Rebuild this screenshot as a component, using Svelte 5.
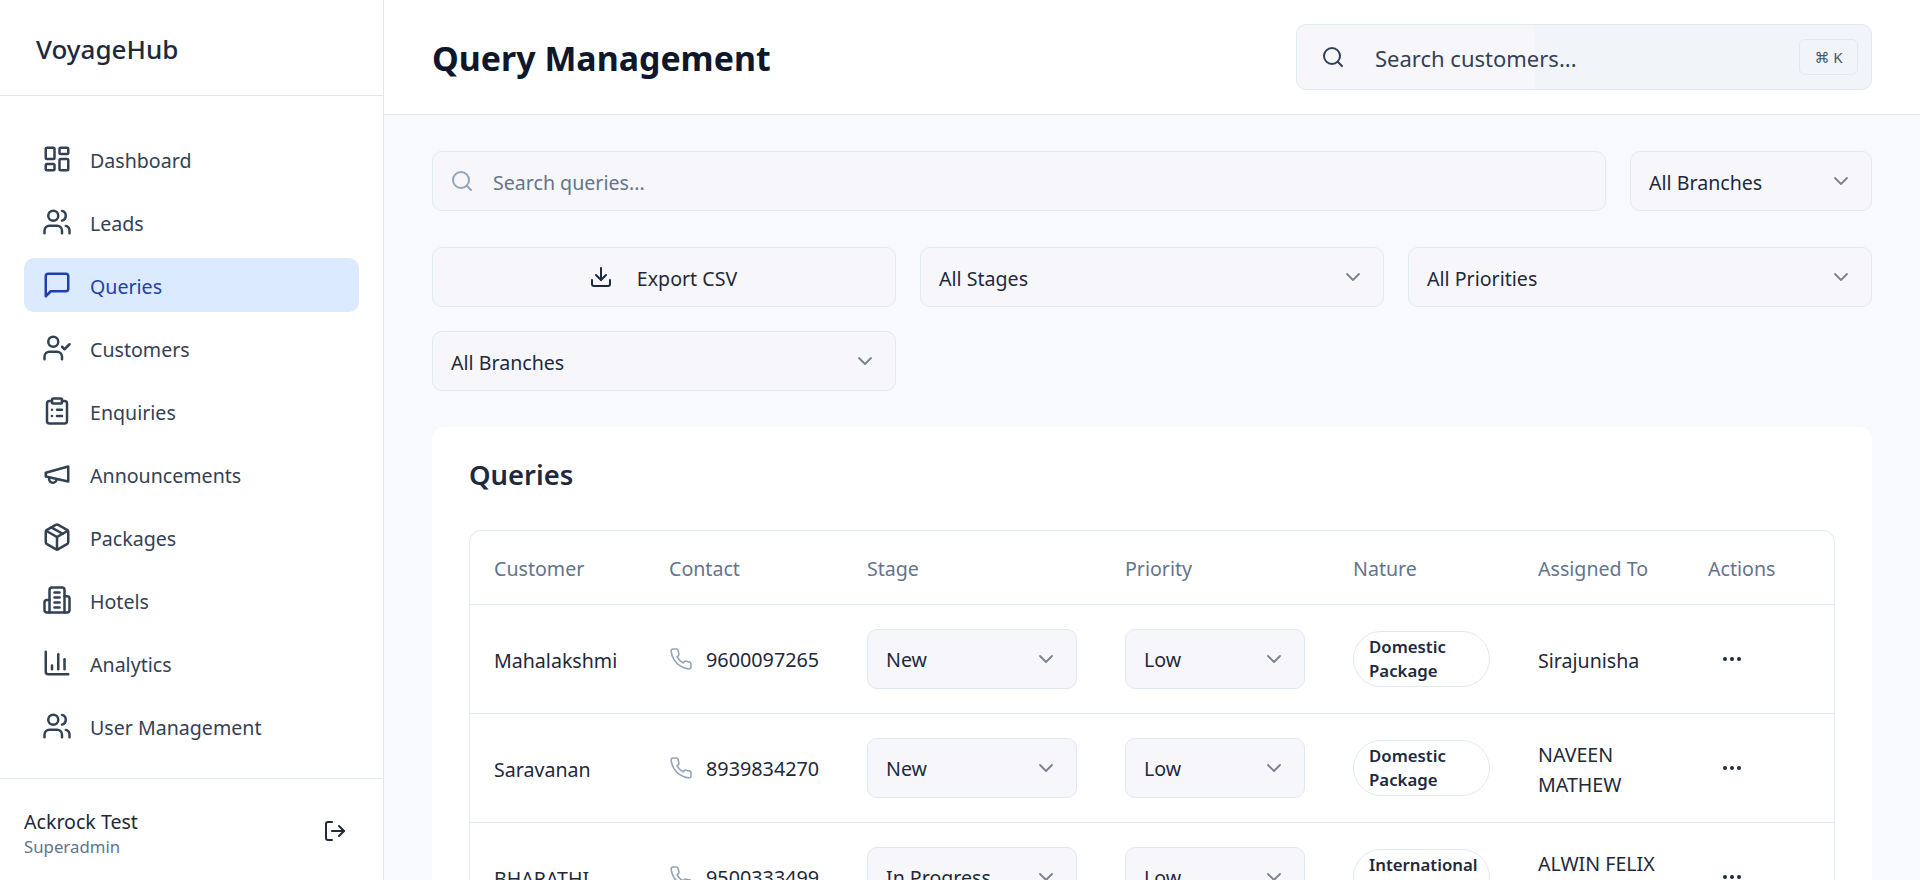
<script lang="ts">
  const icons: Record<string, string[]> = {
    dashboard: [
      "M4 3h5a1 1 0 0 1 1 1v7a1 1 0 0 1-1 1H4a1 1 0 0 1-1-1V4a1 1 0 0 1 1-1z",
      "M15 3h5a1 1 0 0 1 1 1v3a1 1 0 0 1-1 1h-5a1 1 0 0 1-1-1V4a1 1 0 0 1 1-1z",
      "M15 12h5a1 1 0 0 1 1 1v7a1 1 0 0 1-1 1h-5a1 1 0 0 1-1-1v-7a1 1 0 0 1 1-1z",
      "M4 16h5a1 1 0 0 1 1 1v3a1 1 0 0 1-1 1H4a1 1 0 0 1-1-1v-3a1 1 0 0 1 1-1z",
    ],
    users: [
      "M16 21v-2a4 4 0 0 0-4-4H6a4 4 0 0 0-4 4v2",
      "M9 3a4 4 0 1 0 0 8a4 4 0 1 0 0-8z",
      "M22 21v-2a4 4 0 0 0-3-3.87",
      "M16 3.13a4 4 0 0 1 0 7.75",
    ],
    message: ["M21 15a2 2 0 0 1-2 2H7l-4 4V5a2 2 0 0 1 2-2h14a2 2 0 0 1 2 2z"],
    userCheck: [
      "M16 21v-2a4 4 0 0 0-4-4H6a4 4 0 0 0-4 4v2",
      "M9 3a4 4 0 1 0 0 8a4 4 0 1 0 0-8z",
      "M16 11l2 2 4-4",
    ],
    clipboard: [
      "M9 2h6a1 1 0 0 1 1 1v2a1 1 0 0 1-1 1H9a1 1 0 0 1-1-1V3a1 1 0 0 1 1-1z",
      "M16 4h2a2 2 0 0 1 2 2v14a2 2 0 0 1-2 2H6a2 2 0 0 1-2-2V6a2 2 0 0 1 2-2h2",
      "M12 11h4",
      "M12 16h4",
      "M8 11h.01",
      "M8 16h.01",
    ],
    megaphone: ["m3 11 18-5v12L3 14v-3z", "M11.6 16.8a3 3 0 1 1-5.8-1.6"],
    box: [
      "M11 21.73a2 2 0 0 0 2 0l7-4A2 2 0 0 0 21 16V8a2 2 0 0 0-1-1.73l-7-4a2 2 0 0 0-2 0l-7 4A2 2 0 0 0 3 8v8a2 2 0 0 0 1 1.73z",
      "M12 22V12",
      "M3.29 7 12 12l8.71-5",
      "m7.5 4.27 9 5.15",
    ],
    building: [
      "M6 22V4a2 2 0 0 1 2-2h8a2 2 0 0 1 2 2v18Z",
      "M6 12H4a2 2 0 0 0-2 2v6a2 2 0 0 0 2 2h2",
      "M18 9h2a2 2 0 0 1 2 2v9a2 2 0 0 1-2 2h-2",
      "M10 6h4",
      "M10 10h4",
      "M10 14h4",
      "M10 18h4",
    ],
    chart: ["M3 3v16a2 2 0 0 0 2 2h16", "M18 17V9", "M13 17V5", "M8 17v-3"],
    logout: ["M9 21H5a2 2 0 0 1-2-2V5a2 2 0 0 1 2-2h4", "M16 17l5-5-5-5", "M21 12H9"],
    search: ["M11 3a8 8 0 1 0 0 16a8 8 0 1 0 0-16z", "m21 21-4.3-4.3"],
    download: ["M21 15v4a2 2 0 0 1-2 2H5a2 2 0 0 1-2-2v-4", "M7 10l5 5 5-5", "M12 15V3"],
    chevron: ["m6 9 6 6 6-6"],
    phone: [
      "M22 16.92v3a2 2 0 0 1-2.18 2 19.79 19.79 0 0 1-8.63-3.07 19.5 19.5 0 0 1-6-6 19.79 19.79 0 0 1-3.07-8.67A2 2 0 0 1 4.11 2h3a2 2 0 0 1 2 1.72 12.84 12.84 0 0 0 .7 2.81 2 2 0 0 1-.45 2.11L8.09 9.91a16 16 0 0 0 6 6l1.27-1.27a2 2 0 0 1 2.11-.45 12.84 12.84 0 0 0 2.81.7A2 2 0 0 1 22 16.92z",
    ],
    dots: ["M12 11a1 1 0 1 0 0 2a1 1 0 1 0 0-2z", "M19 11a1 1 0 1 0 0 2a1 1 0 1 0 0-2z", "M5 11a1 1 0 1 0 0 2a1 1 0 1 0 0-2z"],
  };

  const navItems = [
    { label: "Dashboard", icon: "dashboard" },
    { label: "Leads", icon: "users" },
    { label: "Queries", icon: "message", active: true },
    { label: "Customers", icon: "userCheck" },
    { label: "Enquiries", icon: "clipboard" },
    { label: "Announcements", icon: "megaphone" },
    { label: "Packages", icon: "box" },
    { label: "Hotels", icon: "building" },
    { label: "Analytics", icon: "chart" },
    { label: "User Management", icon: "users" },
  ];

  const queries = [
    { name: "Mahalakshmi", phone: "9600097265", stage: "New", priority: "Low", nature: "Domestic Package", owner: "Sirajunisha" },
    { name: "Saravanan", phone: "8939834270", stage: "New", priority: "Low", nature: "Domestic Package", owner: "NAVEEN MATHEW" },
    { name: "BHARATHI", phone: "9500333499", stage: "In Progress", priority: "Low", nature: "International Package", owner: "ALWIN FELIX A" },
  ];
</script>

{#snippet icon(name: string, cls: string)}
  <svg class={cls} viewBox="0 0 24 24" fill="none" stroke="currentColor" stroke-linecap="round" stroke-linejoin="round">
    {#each icons[name] as d}
      <path {d} />
    {/each}
  </svg>
{/snippet}

{#snippet dropdown(label: string, cls: string)}
  <div class="select {cls}">
    <span>{label}</span>
    {@render icon("chevron", "chev")}
  </div>
{/snippet}

<div class="app">
  <aside class="sidebar">
    <div class="brand">VoyageHub</div>
    <nav class="nav">
      {#each navItems as item}
        <a class="nav-item" class:active={item.active} href="#/">
          {@render icon(item.icon, "nav-icon")}
          <span>{item.label}</span>
        </a>
      {/each}
    </nav>
    <div class="user">
      <div class="user-info">
        <div class="user-name">Ackrock Test</div>
        <div class="user-role">Superadmin</div>
      </div>
      {@render icon("logout", "logout")}
    </div>
  </aside>

  <main class="main">
    <header class="topbar">
      <h1>Query Management</h1>
      <div class="global-search">
        {@render icon("search", "global-search-icon")}
        <span class="global-search-text">Search customers...</span>
        <kbd>⌘ K</kbd>
      </div>
    </header>

    <div class="content">
      <div class="search-row">
        <div class="query-search">
          {@render icon("search", "query-search-icon")}
          <span>Search queries...</span>
        </div>
        {@render dropdown("All Branches", "branch-top")}
      </div>

      <div class="filters">
        <button class="export">
          {@render icon("download", "export-icon")}
          <span>Export CSV</span>
        </button>
        {@render dropdown("All Stages", "")}
        {@render dropdown("All Priorities", "")}
        {@render dropdown("All Branches", "")}
      </div>

      <section class="card">
        <h2>Queries</h2>
        <div class="table-wrap">
          <table>
            <colgroup>
              <col style="width: 175px" />
              <col style="width: 198px" />
              <col style="width: 258px" />
              <col style="width: 228px" />
              <col style="width: 185px" />
              <col style="width: 170px" />
              <col />
            </colgroup>
            <thead>
              <tr>
                <th>Customer</th>
                <th>Contact</th>
                <th>Stage</th>
                <th>Priority</th>
                <th>Nature</th>
                <th>Assigned To</th>
                <th>Actions</th>
              </tr>
            </thead>
            <tbody>
              {#each queries as q}
                <tr>
                  <td class="text">{q.name}</td>
                  <td>
                    <div class="contact">
                      {@render icon("phone", "phone")}
                      <span>{q.phone}</span>
                    </div>
                  </td>
                  <td>{@render dropdown(q.stage, "stage")}</td>
                  <td>{@render dropdown(q.priority, "priority")}</td>
                  <td><span class="pill">{q.nature}</span></td>
                  <td class="text">{q.owner}</td>
                  <td>
                    <div class="dots">{@render icon("dots", "dots-icon")}</div>
                  </td>
                </tr>
              {/each}
            </tbody>
          </table>
        </div>
      </section>
    </div>
  </main>
</div>

<style>
  :global(body) {
    margin: 0;
    font-family: "Noto Sans", "Liberation Sans", sans-serif;
    color: #1e293b;
  }

  .app {
    display: flex;
    height: 100vh;
    overflow: hidden;
    background: #f8f9fc;
  }

  .sidebar {
    width: 384px;
    flex: none;
    box-sizing: border-box;
    display: flex;
    flex-direction: column;
    background: #fff;
    border-right: 1px solid #e2e8f0;
  }

  .brand {
    height: 96px;
    box-sizing: border-box;
    flex: none;
    display: flex;
    align-items: center;
    padding-left: 36px;
    padding-top: 2px;
    border-bottom: 1px solid #e2e8f0;
    font-size: 26px;
    font-weight: 500;
    color: #1e293b;
  }

  .nav {
    flex: 1;
    display: flex;
    flex-direction: column;
    gap: 9px;
    padding: 36px 24px 0;
  }

  .nav-item {
    height: 54px;
    box-sizing: border-box;
    display: flex;
    align-items: center;
    gap: 18px;
    padding-left: 18px;
    border-radius: 10px;
    font-size: 19.6px;
    color: #334155;
    text-decoration: none;
  }

  .nav-item span {
    padding-top: 3px;
  }

  .nav-item.active {
    background: #dbeafe;
    color: #1e40af;
  }

  .nav-icon {
    width: 30px;
    height: 30px;
    flex: none;
    stroke-width: 2;
  }

  .user {
    height: 102px;
    box-sizing: border-box;
    flex: none;
    display: flex;
    align-items: center;
    justify-content: space-between;
    padding: 0 36px 0 24px;
    border-top: 1px solid #e2e8f0;
  }

  .user-info {
    margin-top: 7px;
  }

  .user-name {
    font-size: 19.6px;
    line-height: 27px;
    color: #1e293b;
  }

  .user-role {
    font-size: 16.8px;
    line-height: 24px;
    color: #64748b;
  }

  .logout {
    width: 24px;
    height: 24px;
    margin-top: 2px;
    stroke-width: 2;
    color: #1e293b;
  }

  .main {
    flex: 1;
    min-width: 0;
    display: flex;
    flex-direction: column;
  }

  .topbar {
    height: 115px;
    box-sizing: border-box;
    flex: none;
    display: flex;
    align-items: center;
    justify-content: space-between;
    padding: 0 48px;
    background: #fff;
    border-bottom: 1px solid #e2e8f0;
  }

  h1 {
    margin: 0;
    padding-top: 2px;
    font-size: 33.9px;
    font-weight: 700;
    color: #0f172a;
  }

  .global-search {
    width: 576px;
    height: 66px;
    box-sizing: border-box;
    display: flex;
    align-items: center;
    padding: 0 13px 0 24px;
    border: 1px solid #e2e8f0;
    border-radius: 10px;
    background: linear-gradient(to right, #f7f7fb 238px, #f1f5f9 238px);
  }

  .global-search-icon {
    width: 24px;
    height: 24px;
    flex: none;
    stroke-width: 2;
    color: #334155;
  }

  .global-search-text {
    flex: 1;
    margin-left: 30px;
    padding-top: 2px;
    font-size: 22px;
    color: #334155;
  }

  kbd {
    width: 59px;
    height: 36px;
    box-sizing: border-box;
    display: flex;
    align-items: center;
    justify-content: center;
    border: 1px solid #e2e8f0;
    border-radius: 6px;
    background: #f1f5f9;
    font-family: "Noto Sans", "DejaVu Sans", sans-serif;
    font-size: 15px;
    color: #475569;
  }

  .content {
    flex: 1;
    padding: 36px 48px;
  }

  .search-row {
    display: flex;
    gap: 24px;
    margin-bottom: 36px;
  }

  .query-search {
    flex: 1;
    height: 60px;
    box-sizing: border-box;
    display: flex;
    align-items: center;
    gap: 19px;
    padding-left: 17px;
    border: 1px solid #e2e8f0;
    border-radius: 10px;
    background: #f7f7fb;
    font-size: 19.6px;
    color: #64748b;
  }

  .query-search span {
    padding-top: 3px;
  }

  .query-search-icon {
    width: 24px;
    height: 24px;
    flex: none;
    stroke-width: 2;
    color: #94a3b8;
  }

  .select {
    height: 60px;
    box-sizing: border-box;
    display: flex;
    align-items: center;
    justify-content: space-between;
    padding: 0 18px;
    border: 1px solid #e2e8f0;
    border-radius: 10px;
    background: #f7f7fb;
    font-size: 19.6px;
    color: #1e293b;
  }

  .select span {
    padding-top: 3px;
  }

  .branch-top {
    width: 242px;
    flex: none;
  }

  .chev {
    width: 24px;
    height: 24px;
    flex: none;
    stroke-width: 1.8;
    color: #78818f;
  }

  .filters {
    display: grid;
    grid-template-columns: repeat(3, 1fr);
    gap: 24px;
    margin-bottom: 36px;
  }

  .export {
    height: 60px;
    box-sizing: border-box;
    display: flex;
    align-items: center;
    justify-content: center;
    gap: 24px;
    padding: 0 2px 0 0;
    border: 1px solid #e2e8f0;
    border-radius: 10px;
    background: #f7f7fb;
    font: inherit;
    font-size: 19.6px;
    color: #1e293b;
  }

  .export span {
    padding-top: 3px;
  }

  .export-icon {
    width: 24px;
    height: 24px;
    stroke-width: 2;
  }

  .card {
    padding: 24px 37px;
    background: #fff;
    border-radius: 12px;
  }

  h2 {
    margin: 0 0 31px;
    font-size: 27.4px;
    line-height: 48px;
    font-weight: 600;
    color: #1e293b;
  }

  .table-wrap {
    border: 1px solid #e2e8f0;
    border-radius: 12px;
    overflow: hidden;
  }

  table {
    width: 100%;
    table-layout: fixed;
    border-collapse: collapse;
  }

  th {
    box-sizing: border-box;
    height: 73px;
    padding: 2px 24px 0;
    text-align: left;
    font-size: 19.6px;
    font-weight: 400;
    color: #64748b;
  }

  td {
    box-sizing: border-box;
    height: 109px;
    padding: 0 24px;
    border-top: 1px solid #e2e8f0;
    font-size: 19.6px;
    line-height: 30px;
    color: #1e293b;
  }

  td.text {
    padding-top: 4px;
  }

  .contact {
    display: flex;
    align-items: center;
    gap: 13px;
  }

  .contact span {
    padding-top: 3px;
    font-size: 19.8px;
  }

  .phone {
    width: 24px;
    height: 24px;
    flex: none;
    stroke-width: 1.6;
    color: #94a3b8;
  }

  .select.stage {
    width: 210px;
  }

  .select.priority {
    width: 180px;
  }

  .pill {
    width: 137px;
    box-sizing: border-box;
    display: block;
    padding: 3px 15px;
    border: 1px solid #e2e8f0;
    border-radius: 28px;
    font-size: 16.8px;
    line-height: 24px;
    font-weight: 600;
    color: #1e293b;
  }

  .dots {
    width: 48px;
    display: flex;
    justify-content: center;
  }

  .dots-icon {
    width: 24px;
    height: 24px;
    stroke-width: 2;
    color: #1e293b;
  }
</style>
